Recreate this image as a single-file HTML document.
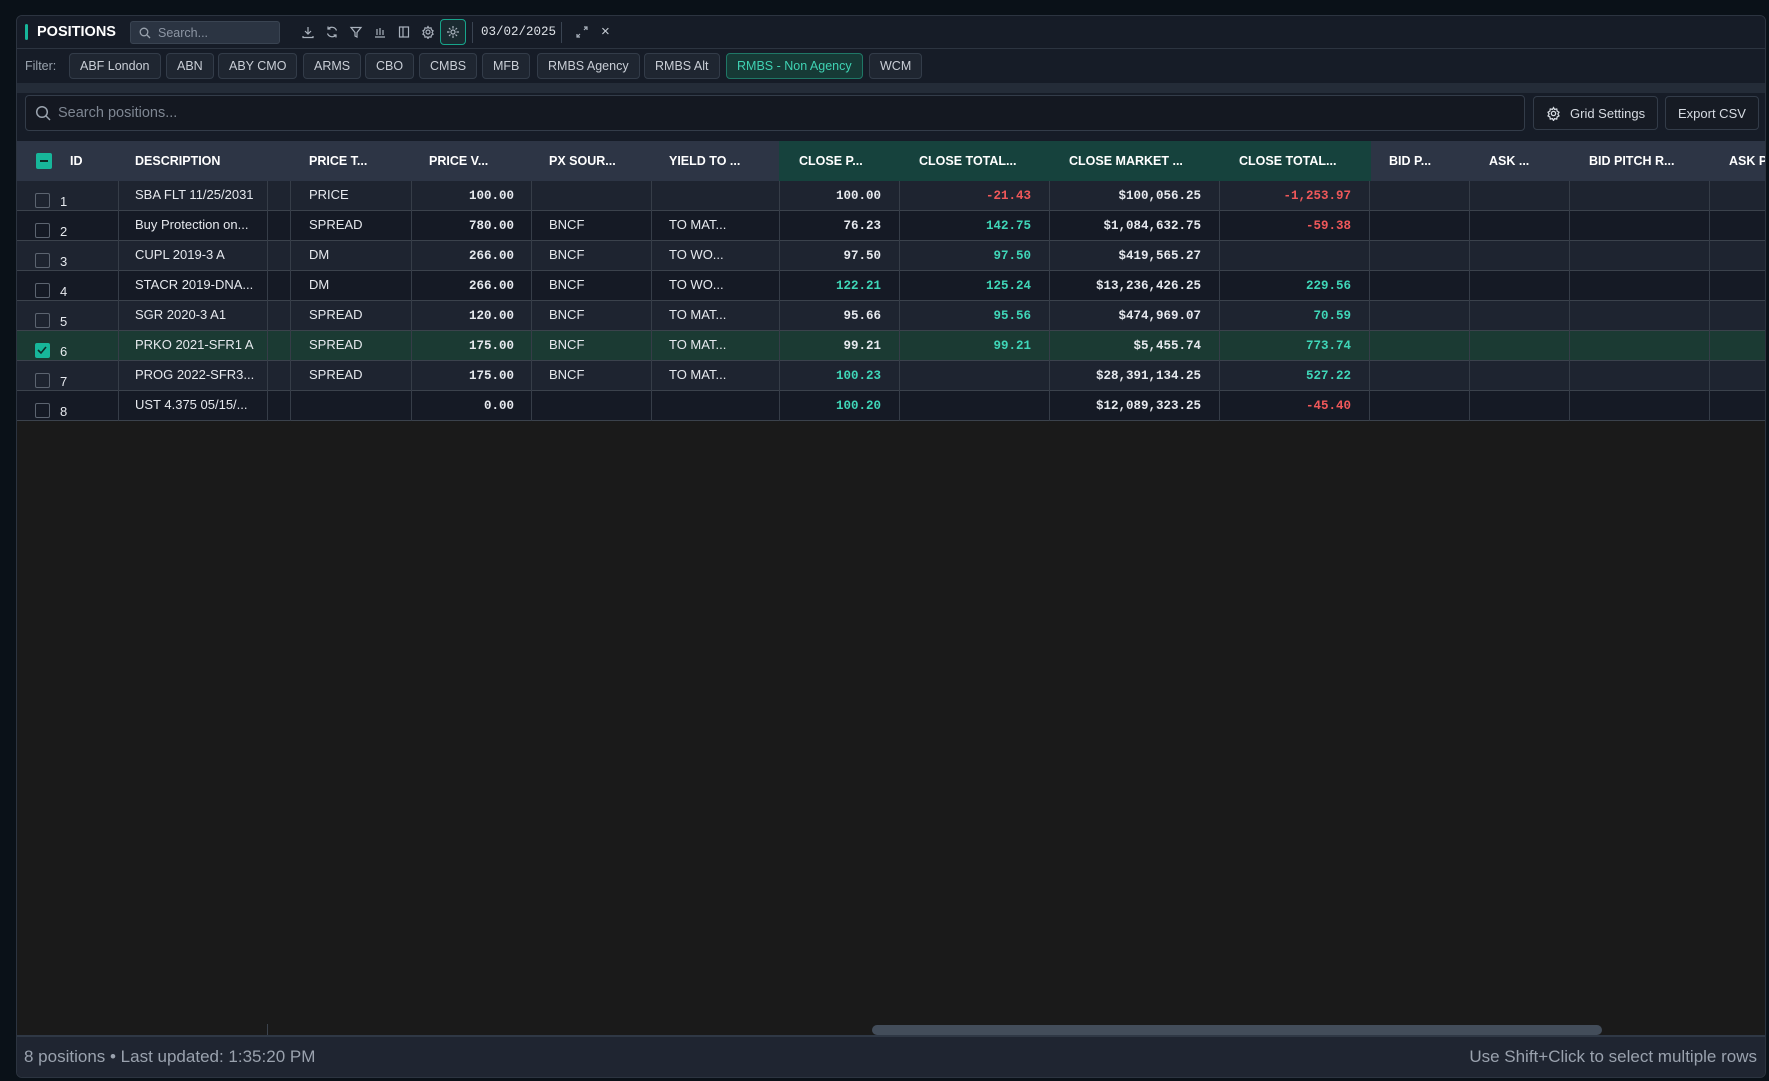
<!DOCTYPE html>
<html><head><meta charset="utf-8"><style>
*{box-sizing:border-box;margin:0;padding:0}
body{width:1769px;height:1081px;background:#0a1118;font-family:"Liberation Sans",sans-serif;color:#e6e9ee;overflow:hidden;position:relative}
.panel{position:absolute;left:16px;top:15px;width:1750px;height:1063px;background:#1a1a1a;border:1px solid #2c3440;border-radius:6px;overflow:hidden}
.title{position:absolute;left:0;top:0;width:100%;height:33px;background:#161c27;border-bottom:1px solid #2c3440}
.title .bar{position:absolute;left:8px;top:8px;width:3px;height:16px;background:#17b69a;border-radius:2px}
.title .t{position:absolute;left:20px;top:8px;font-weight:bold;font-size:14.5px;color:#fff}
.sbox{position:absolute;left:113px;top:5px;width:150px;height:23px;background:#2b3442;border:1px solid #3a4452;border-radius:3px;font-size:12.5px;color:#8c95a3;padding:4px 0 0 27px}
.ico{position:absolute;top:9px;width:14px;height:14px;color:#aab2bd}
.date{position:absolute;left:464px;top:9px;font-family:"Liberation Mono",monospace;font-size:12.5px;color:#dfe3e8}
.sep{position:absolute;top:6px;width:1px;height:21px;background:#3a4452}
.filter{position:absolute;left:0;top:33px;width:100%;height:34px;background:#161c27}
.filter .lbl{position:absolute;left:8px;top:10px;font-size:12.5px;color:#9aa3ae}
.chip{position:absolute;top:4px;height:26px;border:1px solid #333c49;background:#1f2631;border-radius:4px;font-size:12.5px;color:#c9ced6;padding:5px 10px 0;white-space:nowrap}
.chip.on{background:#163a36;border-color:#1f7766;color:#3fd2b3}
.band{position:absolute;left:0;top:67px;width:100%;height:10px;background:#242c38}
.srow{position:absolute;left:0;top:77px;width:100%;height:48px;background:#161c27}
.search{position:absolute;left:8px;top:2px;width:1500px;height:36px;background:#141821;border:1px solid #333c49;border-radius:4px;font-size:14.5px;color:#7e8692;padding:9px 0 0 32px}
.btn{position:absolute;top:3px;height:34px;border:1px solid #333c49;background:#161b24;border-radius:4px;font-size:13px;color:#d6dbe2;padding:9px 12px 0;white-space:nowrap}
.gridtop{position:absolute;left:0;top:125px;width:100%;height:40px;background:#2d3545}
.cell{position:absolute;white-space:nowrap;overflow:hidden;font-size:13px}
.hd{font-weight:bold;font-size:12.5px;color:#fff;top:13px}
.row{position:absolute;left:0;width:100%;height:30px;border-bottom:1px solid #3b424c}
.vl{position:absolute;top:0;width:1px;height:30px;background:#363d48}
.num{font-family:"Liberation Mono",monospace;text-align:right;font-size:12.5px;font-weight:bold}
.g{color:#3fd6b8}.r{color:#f0585a}
.cb{position:absolute;left:18px;top:12px;width:15px;height:15px;border:1.5px solid #5c6470;border-radius:2px}
.foot{position:absolute;left:0;top:1019px;width:100%;height:44px;background:#1f2531;border-top:2px solid #2f3845;font-size:17px;color:#9aa2ae}
</style></head><body>
<div class="panel">
 <div class="title">
  <div class="bar"></div><div class="t">POSITIONS</div>
  <div class="sbox"><svg style="position:absolute;left:8px;top:5px" width="12" height="12" viewBox="0 0 12 12" fill="none" stroke="#9aa3ae" stroke-width="1.3"><circle cx="5" cy="5" r="3.8"/><path d="M8 8l3 3"/></svg>Search...</div>
  <svg class="ico" style="left:284px" viewBox="0 0 14 14" fill="none" stroke="#aab2bd" stroke-width="1.2"><path d="M7 2v7M4 6l3 3 3-3M2 11v1.5h10V11"/></svg>
  <svg class="ico" style="left:308px" viewBox="0 0 14 14" fill="none" stroke="#aab2bd" stroke-width="1.2"><path d="M11.5 5.5A5 5 0 0 0 3 4M2.5 8.5A5 5 0 0 0 11 10M3 1.5V4h2.5M11 12.5V10H8.5"/></svg>
  <svg class="ico" style="left:332px" viewBox="0 0 14 14" fill="none" stroke="#aab2bd" stroke-width="1.2"><path d="M2 2.5h10L8 7.5v4.5l-2-1V7.5z"/></svg>
  <svg class="ico" style="left:356px" viewBox="0 0 14 14" fill="none" stroke="#aab2bd" stroke-width="1.2"><path d="M2 12h10M4 10V4M7 10V3M10 10V5"/></svg>
  <svg class="ico" style="left:380px" viewBox="0 0 14 14" fill="none" stroke="#aab2bd" stroke-width="1.2"><rect x="2.5" y="2" width="9" height="10"/><path d="M6 2v10"/></svg>
  <svg class="ico" style="left:404px" viewBox="0 0 14 14" fill="none" stroke="#aab2bd" stroke-width="1.2"><circle cx="7" cy="7" r="2"/><path d="M7 1.5l1 1.7 2-.4.4 2 1.7 1-1 1.7 1 1.7-1.7 1-.4 2-2-.4-1 1.7-1-1.7-2 .4-.4-2-1.7-1 1-1.7-1-1.7 1.7-1 .4-2 2 .4z"/></svg>
  <div style="position:absolute;left:423px;top:3px;width:26px;height:26px;border:1.5px solid #17a58b;border-radius:4px;background:#1a2a30"></div>
  <svg class="ico" style="left:429px" viewBox="0 0 14 14" fill="none" stroke="#aab2bd" stroke-width="1.2"><circle cx="7" cy="7" r="2"/><path d="M7 1v2.5M7 10.5V13M1 7h2.5M10.5 7H13M3 3l1.5 1.5M9.5 9.5L11 11M3 11l1.5-1.5M9.5 4.5L11 3"/></svg>
  <div class="sep" style="left:455px"></div>
  <div class="date">03/02/2025</div>
  <div class="sep" style="left:544px"></div>
  <svg class="ico" style="left:558px" viewBox="0 0 14 14" fill="none" stroke="#aab2bd" stroke-width="1.2"><path d="M9 2h3v3M12 2L9 5M5 12H2V9M2 12l3-3"/></svg>
  <div style="position:absolute;left:584px;top:7px;font-size:15px;color:#c5ccd4">×</div>
 </div>
 <div class="filter">
  <div class="lbl">Filter:</div>
  <div class="chip" style="left:52px">ABF London</div>
  <div class="chip" style="left:149px">ABN</div>
  <div class="chip" style="left:201px">ABY CMO</div>
  <div class="chip" style="left:286px">ARMS</div>
  <div class="chip" style="left:348px">CBO</div>
  <div class="chip" style="left:402px">CMBS</div>
  <div class="chip" style="left:465px">MFB</div>
  <div class="chip" style="left:520px">RMBS Agency</div>
  <div class="chip" style="left:627px">RMBS Alt</div>
  <div class="chip on" style="left:709px">RMBS - Non Agency</div>
  <div class="chip" style="left:852px">WCM</div>
 </div>
 <div class="band"></div>
 <div class="srow">
  <div class="search"><svg style="position:absolute;left:9px;top:9px" width="16" height="16" viewBox="0 0 16 16" fill="none" stroke="#9aa3ae" stroke-width="1.5"><circle cx="7" cy="7" r="5.3"/><path d="M11 11l4 4"/></svg>Search positions...</div>
  <div class="btn" style="left:1516px;padding-left:36px"><svg style="position:absolute;left:12px;top:9px" width="15" height="15" viewBox="0 0 14 14" fill="none" stroke="#d6dbe2" stroke-width="1.2"><circle cx="7" cy="7" r="2"/><path d="M7 1.5l1 1.7 2-.4.4 2 1.7 1-1 1.7 1 1.7-1.7 1-.4 2-2-.4-1 1.7-1-1.7-2 .4-.4-2-1.7-1 1-1.7-1-1.7 1.7-1 .4-2 2 .4z"/></svg>Grid Settings</div>
  <div class="btn" style="left:1648px">Export CSV</div>
 </div>
 <div class="gridtop">
  <div style="position:absolute;left:762px;top:0;width:592px;height:40px;background:#16423d"></div>
  <div style="position:absolute;left:19px;top:12px;width:16px;height:16px;background:#17b69a;border-radius:2px"><div style="position:absolute;left:4px;top:7px;width:8px;height:2px;background:#0e2a26"></div></div>
  <div class="cell hd" style="left:53px">ID</div>
  <div class="cell hd" style="left:118px">DESCRIPTION</div>
  <div class="cell hd" style="left:292px">PRICE T...</div>
  <div class="cell hd" style="left:412px">PRICE V...</div>
  <div class="cell hd" style="left:532px">PX SOUR...</div>
  <div class="cell hd" style="left:652px">YIELD TO ...</div>
  <div class="cell hd" style="left:782px">CLOSE P...</div>
  <div class="cell hd" style="left:902px">CLOSE TOTAL...</div>
  <div class="cell hd" style="left:1052px">CLOSE MARKET ...</div>
  <div class="cell hd" style="left:1222px">CLOSE TOTAL...</div>
  <div class="cell hd" style="left:1372px">BID P...</div>
  <div class="cell hd" style="left:1472px">ASK ...</div>
  <div class="cell hd" style="left:1572px">BID PITCH R...</div>
  <div class="cell hd" style="left:1712px">ASK P</div>
 </div>
 <div id="rows"></div>
 <div style="position:absolute;left:855px;top:1009px;width:730px;height:10px;background:#434d5a;border-radius:5px"></div>
 <div style="position:absolute;left:250px;top:1008px;width:1px;height:11px;background:#3b424c"></div>
 <div class="foot"><div style="position:absolute;left:7px;top:10px">8 positions • Last updated: 1:35:20 PM</div><div style="position:absolute;right:8px;top:10px">Use Shift+Click to select multiple rows</div></div>
</div>
<script>
var d=[["1","SBA FLT 11/25/2031","PRICE","100.00","","","100.00","","-21.43","r","$100,056.25","-1,253.97","r",""],
["2","Buy Protection on...","SPREAD","780.00","BNCF","TO MAT...","76.23","","142.75","g","$1,084,632.75","-59.38","r",""],
["3","CUPL 2019-3 A","DM","266.00","BNCF","TO WO...","97.50","","97.50","g","$419,565.27","","",""],
["4","STACR 2019-DNA...","DM","266.00","BNCF","TO WO...","122.21","g","125.24","g","$13,236,426.25","229.56","g",""],
["5","SGR 2020-3 A1","SPREAD","120.00","BNCF","TO MAT...","95.66","","95.56","g","$474,969.07","70.59","g",""],
["6","PRKO 2021-SFR1 A","SPREAD","175.00","BNCF","TO MAT...","99.21","","99.21","g","$5,455.74","773.74","g","s"],
["7","PROG 2022-SFR3...","SPREAD","175.00","BNCF","TO MAT...","100.23","g","","","$28,391,134.25","527.22","g",""],
["8","UST 4.375 05/15/...","","0.00","","","100.20","g","","","$12,089,323.25","-45.40","r",""]];
var lines=[101,250,273,394,514,634,762,882,1032,1202,1352,1452,1552,1692];
var h="";
d.forEach(function(r,i){
 var top=165+i*30,bg=r[13]?"#1b3a33":(i%2?"#151a25":"#1e2430");
 h+='<div class="row" style="top:'+top+'px;background:'+bg+'">';
 lines.forEach(function(x){h+='<div class="vl" style="left:'+x+'px"></div>'});
 if(r[13])h+='<div class="cb" style="background:#17b69a;border-color:#17b69a"><svg width="12" height="12" viewBox="0 0 12 12" style="position:absolute;left:0;top:0" fill="none" stroke="#0e2a26" stroke-width="1.6"><path d="M2 6l3 3 5-6"/></svg></div>';
 else h+='<div class="cb"></div>';
 h+='<div class="cell" style="left:43px;top:13px">'+r[0]+'</div>';
 h+='<div class="cell" style="left:118px;top:6px;width:126px">'+r[1]+'</div>';
 h+='<div class="cell" style="left:292px;top:6px">'+r[2]+'</div>';
 h+='<div class="cell num" style="left:394px;width:103px;top:8px">'+r[3]+'</div>';
 h+='<div class="cell" style="left:532px;top:6px">'+r[4]+'</div>';
 h+='<div class="cell" style="left:652px;top:6px">'+r[5]+'</div>';
 h+='<div class="cell num '+r[7]+'" style="left:762px;width:102px;top:8px">'+r[6]+'</div>';
 h+='<div class="cell num '+r[9]+'" style="left:882px;width:132px;top:8px">'+r[8]+'</div>';
 h+='<div class="cell num" style="left:1032px;width:152px;top:8px">'+r[10]+'</div>';
 h+='<div class="cell num '+r[12]+'" style="left:1202px;width:132px;top:8px">'+r[11]+'</div>';
 h+='</div>';
});
document.getElementById("rows").innerHTML=h;
</script>
</body></html>
